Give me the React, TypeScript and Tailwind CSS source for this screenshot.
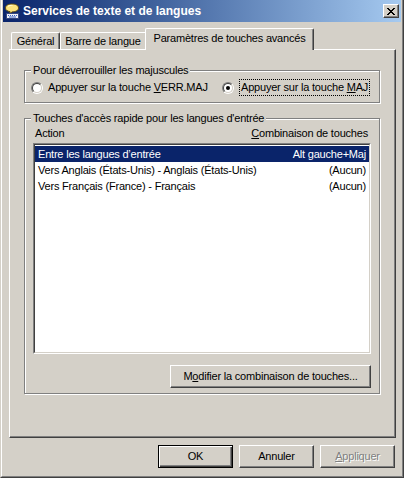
import React from 'react';

const F = "font-['Liberation_Sans',Arial,sans-serif]";

function Radio({ checked }: { checked?: boolean }) {
  return (
    <div className="w-[12px] h-[12px] rounded-full border border-t-[#808080] border-l-[#808080] border-r-white border-b-white shrink-0">
      <div className="w-full h-full rounded-full border border-t-[#404040] border-l-[#404040] border-r-[#d4d0c8] border-b-[#d4d0c8] bg-white flex items-center justify-center">
        {checked && <div className="w-[4px] h-[4px] rounded-full bg-black" />}
      </div>
    </div>
  );
}

function Button({
  children,
  className = '',
  def,
  disabled,
}: {
  children: React.ReactNode;
  className?: string;
  def?: boolean;
  disabled?: boolean;
}) {
  const bord = def
    ? 'border border-black shadow-[inset_1px_1px_0_#fff,inset_-1px_-1px_0_#404040,inset_-2px_-2px_0_#808080]'
    : 'border border-t-white border-l-white border-r-[#404040] border-b-[#404040] shadow-[inset_-1px_-1px_0_#808080]';
  return (
    <div
      className={`h-[23px] flex items-center justify-center bg-[#d4d0c8] text-[11px] ${bord} ${
        disabled ? 'text-[#808080] [text-shadow:1px_1px_0_#fff]' : 'text-black'
      } ${className}`}
    >
      {children}
    </div>
  );
}

function GroupBox({
  legend,
  className = '',
  children,
}: {
  legend: string;
  className?: string;
  children: React.ReactNode;
}) {
  return (
    <div
      className={`relative border border-[#808080] shadow-[inset_1px_1px_0_#fff,1px_1px_0_#fff] ${className}`}
    >
      <span className="absolute left-[6px] top-[-8px] bg-[#d4d0c8] px-[2px] leading-[14px] text-[11px]">
        {legend}
      </span>
      {children}
    </div>
  );
}

function TitleIcon() {
  return (
    <svg width="16" height="16" viewBox="0 0 16 16" className="shrink-0">
      <path
        d="M1.5 5 C1.5 2.2 4.5 1 8 1 C11.5 1 14.5 2.2 14.5 5 C14.5 7.6 11.5 8.8 8.5 8.8 L5.5 10.5 L6 8.6 C3.5 8.3 1.5 7.2 1.5 5Z"
        fill="#fbe27c"
        stroke="#5e4c14"
        strokeWidth="1"
      />
      <path d="M4 3.5 C5 2.6 7 2.3 8.5 2.4" stroke="#fffbe0" strokeWidth="1" fill="none" />
      <rect x="2.5" y="10.5" width="12" height="5" fill="#eef0f6" stroke="#34457e" strokeWidth="1" />
      <path d="M4 12.5h1M6 12.5h1M8 12.5h1M10 12.5h1M12 12.5h1M5 14h7" stroke="#3b63c4" strokeWidth="1" />
    </svg>
  );
}

function CloseGlyph() {
  return (
    <svg width="8" height="7" viewBox="0 0 8 7" shapeRendering="crispEdges">
      <path
        d="M0 0h2v1H0z M6 0h2v1H6z M1 1h2v1H1z M5 1h2v1H5z M2 2h4v1H2z M3 3h2v1H3z M2 4h4v1H2z M1 5h2v1H1z M5 5h2v1H5z M0 6h2v1H0z M6 6h2v1H6z"
        fill="#000"
      />
    </svg>
  );
}

const rows = [
  { a: 'Entre les langues d’entrée', b: 'Alt gauche+Maj', sel: true },
  { a: 'Vers Anglais (États-Unis) - Anglais (États-Unis)', b: '(Aucun)' },
  { a: 'Vers Français (France) - Français', b: '(Aucun)' },
];

export default function App() {
  return (
    <div className={`w-[404px] h-[478px] bg-[#d4d0c8] ${F} text-[11px] tracking-[-0.2px] text-black`}>
      <div className="w-full h-full border-l border-l-[#d4d0c8] border-r border-r-[#404040] border-b border-b-[#404040]">
        <div className="w-full h-full border-l border-l-white border-r border-r-[#808080] border-b border-b-[#808080] px-[1px] pb-[1px] flex flex-col">
          {/* Title bar */}
          <div className="h-[22px] shrink-0 bg-linear-to-r from-[#0a246a] to-[#a6caf0] flex items-center pl-[1px] pr-[2px]">
            <TitleIcon />
            <span className="ml-[3px] text-white font-bold text-[12px] tracking-normal leading-none flex-1">
              Services de texte et de langues
            </span>
            <div className="w-[16px] h-[14px] bg-[#d4d0c8] border border-t-white border-l-white border-r-[#404040] border-b-[#404040] shadow-[inset_-1px_-1px_0_#808080] flex items-center justify-center">
              <CloseGlyph />
            </div>
          </div>

          {/* Tabs */}
          <div className="mt-[6px] ml-[8px] h-[21px] flex items-end">
            <div className="w-[49px] h-[17px] border-t border-l border-t-white border-l-white border-r border-r-[#404040] shadow-[inset_-1px_0_0_#808080] rounded-tl-[2px] rounded-tr-[2px] flex items-center justify-center">
              Général
            </div>
            <div className="w-[85px] h-[17px] border-t border-l border-t-white border-l-white rounded-tl-[2px] flex items-center justify-center">
              Barre de langue
            </div>
            <div className="relative z-10 w-[169px] h-[22px] -mb-[1px] bg-[#d4d0c8] border-t border-l border-t-white border-l-white border-r border-r-[#404040] shadow-[inset_-1px_0_0_#808080] rounded-tl-[2px] rounded-tr-[2px] flex items-center justify-center pb-[2px]">
              Paramètres de touches avancés
            </div>
          </div>

          {/* Panel */}
          <div className="ml-[6px] w-[387px] h-[389px] shrink-0 border border-t-white border-l-white border-r-[#404040] border-b-[#404040] shadow-[inset_-1px_-1px_0_#808080] pl-[14px] flex flex-col">
            <GroupBox legend="Pour déverrouiller les majuscules" className="mt-[20px] w-[356px] h-[33px]">
              <div className="mt-[8px] h-[17px] flex items-center pl-[6px]">
                <div className="w-[191px] flex items-center">
                  <Radio />
                  <span className="ml-[5px]">
                    Appuyer sur la touche <span className="underline">V</span>ERR.MAJ
                  </span>
                </div>
                <Radio checked />
                <span className="ml-[6px] outline-1 outline-dotted outline-black px-[1px] leading-[15px]">
                  Appuyer sur la touche <span className="underline">M</span>AJ
                </span>
              </div>
            </GroupBox>

            <GroupBox
              legend="Touches d'accès rapide pour les langues d'entrée"
              className="mt-[15px] w-[356px] h-[276px] flex flex-col"
            >
              <div className="mt-[8px] h-[13px] flex items-center justify-between pl-[10px] pr-[11px]">
                <span>Action</span>
                <span>
                  <span className="underline">C</span>ombinaison de touches
                </span>
              </div>
              <div className="mt-[3px] ml-[8px] w-[338px] h-[211px] border border-t-[#808080] border-l-[#808080] border-r-white border-b-white">
                <div className="w-full h-full bg-white border border-t-[#404040] border-l-[#404040] border-r-[#d4d0c8] border-b-[#d4d0c8] pt-[1px]">
                  {rows.map((r) => (
                    <div
                      key={r.a}
                      className={`h-[16px] flex items-center justify-between px-[3px] ${
                        r.sel ? 'bg-[#0a246a] text-white' : 'text-black'
                      }`}
                    >
                      <span>{r.a}</span>
                      <span>{r.b}</span>
                    </div>
                  ))}
                </div>
              </div>
              <div className="mt-[11px] flex justify-end pr-[8px]">
                <Button className="w-[201px]">
                  <span>
                    M<span className="underline">o</span>difier la combinaison de touches...
                  </span>
                </Button>
              </div>
            </GroupBox>
          </div>

          {/* Bottom buttons */}
          <div className="mt-[7px] flex justify-end gap-[6px] pr-[6px]">
            <Button def className="w-[75px]">
              OK
            </Button>
            <Button className="w-[75px]">Annuler</Button>
            <Button disabled className="w-[75px]">
              <span>
                <span className="underline">A</span>ppliquer
              </span>
            </Button>
          </div>
        </div>
      </div>
    </div>
  );
}
